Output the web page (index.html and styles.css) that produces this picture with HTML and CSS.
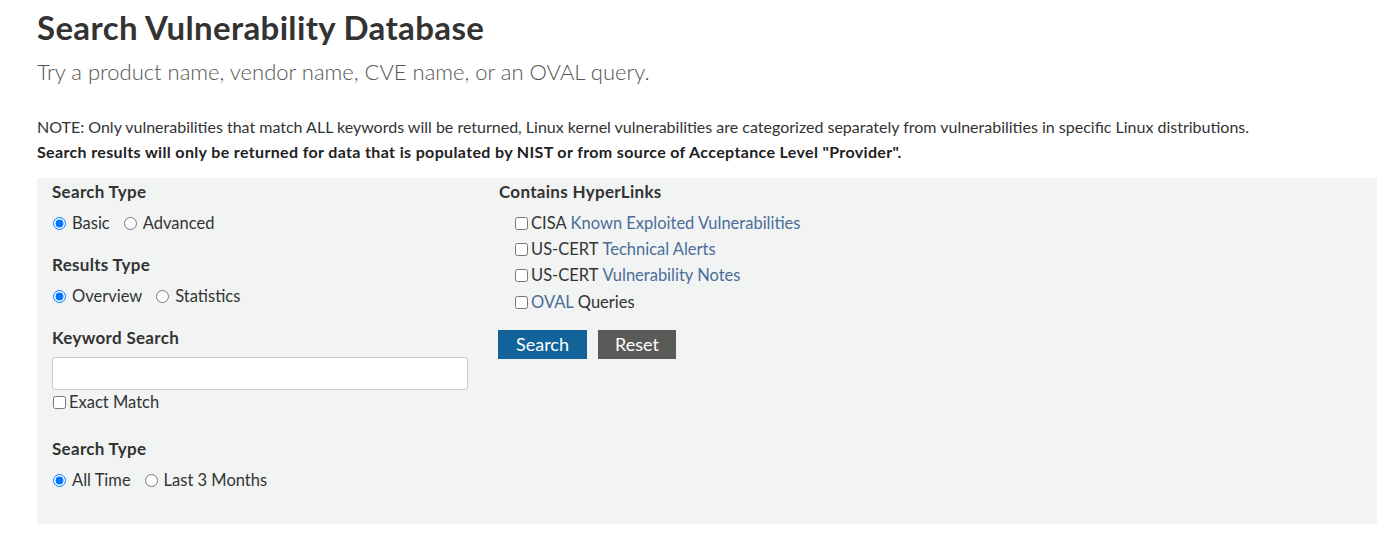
FILE: index.html
```html
<!DOCTYPE html>
<html lang="en">
<head>
<meta charset="utf-8">
<title>Search Vulnerability Database</title>
<link rel="stylesheet" href="styles.css">
</head>
<body>
<div class="page">
  <h1 class="title">Search Vulnerability Database</h1>
  <p class="lead">Try a product name, vendor name, CVE name, or an OVAL query.</p>
  <p class="note">NOTE: Only vulnerabilities that match ALL keywords will be returned, Linux kernel vulnerabilities are categorized separately from vulnerabilities in specific Linux distributions.</p>
  <p class="note-strong">Search results will only be returned for data that is populated by NIST or from source of Acceptance Level "Provider".</p>

  <form class="panel">
    <div class="col-left">
      <div class="group">
        <div class="label">Search Type</div>
        <div class="options">
          <label class="opt"><input type="radio" name="st" checked> Basic</label>
          <label class="opt"><input type="radio" name="st"> Advanced</label>
        </div>
      </div>
      <div class="group">
        <div class="label">Results Type</div>
        <div class="options">
          <label class="opt"><input type="radio" name="rt" checked> Overview</label>
          <label class="opt"><input type="radio" name="rt"> Statistics</label>
        </div>
      </div>
      <div class="group group-kw">
        <div class="label kw">Keyword Search</div>
        <input class="text" type="text">
        <label class="exact"><input type="checkbox">Exact Match</label>
      </div>
      <div class="group">
        <div class="label">Search Type</div>
        <div class="options">
          <label class="opt"><input type="radio" name="tt" checked> All Time</label>
          <label class="opt"><input type="radio" name="tt"> Last 3 Months</label>
        </div>
      </div>
    </div>
    <div class="col-right">
      <div class="label">Contains HyperLinks</div>
      <ul class="checks">
        <li><label><input type="checkbox">CISA <a href="#">Known Exploited Vulnerabilities</a></label></li>
        <li><label><input type="checkbox">US-CERT <a href="#">Technical Alerts</a></label></li>
        <li><label><input type="checkbox">US-CERT <a href="#">Vulnerability Notes</a></label></li>
        <li><label><input type="checkbox"><a href="#">OVAL</a> Queries</label></li>
      </ul>
      <div class="buttons">
        <button type="button" class="btn btn-primary">Search</button>
        <button type="button" class="btn btn-gray">Reset</button>
      </div>
    </div>
  </form>
</div>
</body>
</html>
```
FILE: styles.css
```css
html, body {
  margin: 0;
  padding: 0;
  background: #ffffff;
}
body {
  font-family: Lato, "Liberation Sans", sans-serif;
  color: #333333;
}
.page {
  padding: 0 18px 0 37px;
}
.title {
  margin: 0;
  padding-top: 9px;
  font-size: 33px;
  line-height: 36px;
  font-weight: 700;
  letter-spacing: 0.35px;
  color: #333333;
}
.lead {
  margin: 12px 0 0 0;
  font-size: 22px;
  line-height: 30px;
  font-weight: 300;
  color: #555555;
}
.note {
  margin: 29px 0 0 0;
  font-size: 16px;
  line-height: 22px;
  color: #333333;
}
.note-strong {
  margin: 3px 0 0 0;
  font-size: 16px;
  line-height: 22px;
  font-weight: 700;
  letter-spacing: 0.35px;
  color: #222222;
}
.panel {
  margin-top: 15px;
  height: 346px;
  box-sizing: border-box;
  background: #f2f4f4;
  padding: 3px 15px 0 15px;
  display: flex;
  gap: 31px;
}
.col-left {
  width: 416px;
  display: flex;
  flex-direction: column;
}
.group {
  margin-bottom: 20px;
}
.group-kw {
  margin-bottom: 25px;
}
.label {
  font-size: 17px;
  font-weight: 700;
  line-height: 22px;
  letter-spacing: 0.3px;
  color: #333333;
}
.options {
  display: flex;
  gap: 13px;
  margin-top: 9px;
  font-size: 16.5px;
  line-height: 22px;
}
.opt {
  display: flex;
  align-items: center;
}
.opt input {
  margin: 0 6px 0 1px;
  width: 13px;
  height: 13px;
}
.kw {
  margin-bottom: 8px;
}
.text {
  display: block;
  width: 416px;
  height: 33px;
  box-sizing: border-box;
  border: 1px solid #cccccc;
  border-radius: 3px;
  background: #ffffff;
  margin: 0;
}
.exact {
  display: flex;
  align-items: center;
  font-size: 16.5px;
  line-height: 22px;
  margin-top: 1px;
}
.exact input {
  margin: 0 3px 0 1px;
  width: 13px;
  height: 13px;
}
.col-right {
  display: flex;
  flex-direction: column;
}
.checks {
  list-style: none;
  margin: 7px 0 0 0;
  padding: 0 0 0 16px;
}
.checks li {
  font-size: 16.5px;
  line-height: 26px;
  height: 26px;
}
.checks li:last-child {
  margin-top: 1px;
}
.checks label {
  display: flex;
  align-items: center;
}
.checks input {
  margin: 0 3px 0 0;
  width: 13px;
  height: 13px;
}
.checks a {
  color: #4a6d99;
  text-decoration: none;
  margin-left: 4px;
}
.checks li:last-child a {
  margin-left: 0;
  margin-right: 4px;
}
.buttons {
  display: flex;
  gap: 11px;
  margin-top: 15px;
  margin-left: -1px;
}
.btn {
  font-family: Lato, "Liberation Sans", sans-serif;
  font-size: 18px;
  height: 29px;
  border: none;
  border-radius: 0;
  color: #ffffff;
  padding: 0;
  line-height: 29px;
  text-align: center;
}
.btn-primary {
  background: #13639b;
  width: 89px;
}
.btn-gray {
  background: #5a5a59;
  width: 78px;
}
```
